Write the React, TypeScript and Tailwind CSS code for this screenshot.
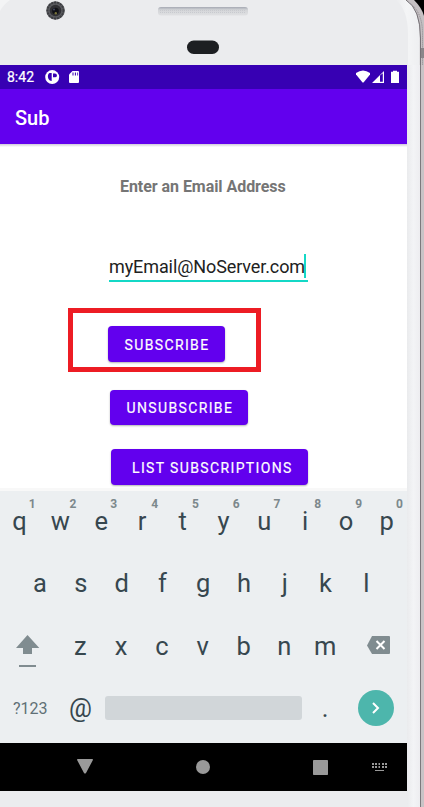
import type { ReactNode } from "react";

const TOP = [
  ["q", "1"], ["w", "2"], ["e", "3"], ["r", "4"], ["t", "5"],
  ["y", "6"], ["u", "7"], ["i", "8"], ["o", "9"], ["p", "0"],
];
const MIDDLE = ["a", "s", "d", "f", "g", "h", "j", "k", "l"];
const BOTTOM = ["z", "x", "c", "v", "b", "n", "m"];

function Key({ children, hint }: { children: ReactNode; hint?: string }) {
  return (
    <div className="relative flex h-full w-[40.8px] shrink-0 items-center justify-center text-[25.5px] leading-none text-[#37474f]">
      {children}
      {hint && (
        <span className="absolute left-[28.5px] top-[7px] w-[9px] text-center text-[12px] font-bold leading-[12px] text-[#7c888c]">
          {hint}
        </span>
      )}
    </div>
  );
}

function PhoneTop() {
  return (
    <div className="relative h-[65px] w-full shrink-0">
      <svg className="block" width="424" height="65" viewBox="0 0 424 65">
        <defs>
          <linearGradient id="speaker" x1="0" y1="0" x2="0" y2="1">
            <stop offset="0" stopColor="#a5a9b3" />
            <stop offset="0.35" stopColor="#d3d5d8" />
            <stop offset="1" stopColor="#e0e1e3" />
          </linearGradient>
          <pattern id="mesh" width="2" height="2" patternUnits="userSpaceOnUse">
            <rect width="1" height="1" fill="#c8cacf" />
          </pattern>
          <linearGradient id="rim" x1="0" y1="0" x2="1" y2="0">
            <stop offset="0" stopColor="#ebecee" />
            <stop offset="0.45" stopColor="#f4f5f6" />
            <stop offset="1" stopColor="#eeeff1" />
          </linearGradient>
        </defs>
        <path d="M398 0H424V65H398Z" fill="#000" />
        <path d="M398 0H414Q422 8 424 16V65H398Z" fill="#c5c0c3" />
        <path d="M405 0Q423 9 422.500 35V65" fill="none" stroke="#8b878b" strokeWidth="1" strokeDasharray="1 1" />
        <path d="M0 0H406Q419.500 9 419.500 38V65H0Z" fill="#ebecee" />
        <path d="M396 0H406Q419.500 9 419.500 38V65H408V34Q408 10 396 0Z" fill="url(#rim)" />
        <path d="M406 0Q420.500 9 420.500 38V65" fill="none" stroke="#767277" strokeWidth="1" />
        <path d="M0 0H10Q4 4 0 11Z" fill="#f3f4f5" />
        <rect x="421" y="48" width="3" height="10" fill="#8a868a" />
        <circle cx="55.500" cy="10.500" r="9.300" fill="#5a5b5f" />
        <circle cx="55.500" cy="10.500" r="8" fill="none" stroke="#3c3d41" strokeWidth="1.800" strokeDasharray="2 1" />
        <circle cx="55.500" cy="10.500" r="5.800" fill="#303034" />
        <circle cx="55.500" cy="11" r="3.300" fill="#101116" />
        <circle cx="55.800" cy="13.300" r="1.200" fill="#78733a" />
        <circle cx="54" cy="9.500" r="0.900" fill="#4a4f68" />
        <rect x="158" y="7" width="90" height="8.500" rx="3" fill="url(#speaker)" />
        <rect x="160" y="9" width="86" height="5" fill="url(#mesh)" />
        <rect x="187" y="40.500" width="32" height="13.500" rx="6.700" fill="#1d1f22" />
      </svg>
    </div>
  );
}

function StatusBar() {
  return (
    <div className="flex h-6 items-center bg-[#3700b3] text-white">
      <span className="ml-[7px] w-[38px] text-[14px] leading-6 [-webkit-text-stroke:0.2px_white]">8:42</span>
      <svg width="36" height="24" viewBox="0 0 36 24" fill="white">
        <circle cx="7.200" cy="12.100" r="7" />
        <path d="M6.700 8V16Q4.500 16 3.500 14Q2.500 12 3 10Q3.500 8.500 4.500 8Z" fill="#3700b3" />
        <path d="M8 8.500H10A1.900 1.900 0 0 1 10 12.300H8Z" fill="#3700b3" />
        <path d="M27.500 6H33Q34 6 34 7V17Q34 18 33 18H25Q24 18 24 17V9.500Z" />
        <path d="M27.500 7.500h1v3h-1zM29.900 7.500h1v3h-1zM32.300 7.500h0.800v3h-0.800z" fill="#3700b3" />
      </svg>
      <svg className="ml-auto" width="52" height="24" viewBox="0 0 52 24" fill="white">
        <path d="M1 8Q8 3 15 8V9.500L8.500 17.500H7.500L1 9.500Z" />
        <path fillRule="evenodd" d="M17 18L29 6V18ZM25 10.500V16.800H27.800V8.200Z" />
        <path d="M36 6.800H38V5.700H42V6.800H44V18H36Z" />
      </svg>
    </div>
  );
}

function ActionButton({ className, children }: { className: string; children: ReactNode }) {
  return (
    <button className={"flex items-center rounded-[4px] bg-[#6200ee] text-[14px] font-normal whitespace-nowrap text-white [-webkit-text-stroke:0.2px_white] shadow-[0_1px_2px_rgba(0,0,0,0.3)] " + className}>
      {children}
    </button>
  );
}

function Content() {
  return (
    <main className="flex h-[347px] flex-col items-start overflow-hidden bg-white">
      <div className="h-[3px] w-full bg-linear-to-b from-[#cfc9da] to-white" />
      <p className="mt-[29px] ml-[120px] h-[22px] whitespace-nowrap text-[16px] font-bold leading-[22px] tracking-[-0.05px] text-[#757575]">Enter an Email Address</p>
      <div className="mt-[54px] ml-[109px] flex h-[30px] w-[199px] border-b-2 border-[#14d8c6] text-[18px] leading-[30px] text-[#212121]">
        <span className="w-[195px] whitespace-nowrap tracking-[-0.1px]">myEmail@NoServer.com</span>
        <span className="mt-[2px] h-[24px] w-[2px] bg-[#14d8c6]" />
      </div>
      <div className="mt-[26px] ml-[68px] h-[64px] w-[193px] border-[5px] border-[#ed1c24] pl-[35px] pt-[13px]">
        <ActionButton className="h-9 w-[117px] pl-[16.5px] pt-[2px] tracking-[1.37px]">SUBSCRIBE</ActionButton>
      </div>
      <ActionButton className="mt-[18px] ml-[110px] h-[35px] w-[138px] pl-[16.5px] pt-[2px] tracking-[1.37px]">UNSUBSCRIBE</ActionButton>
      <ActionButton className="mt-[24px] ml-[111px] h-9 w-[197px] pl-[21px] pt-[2px] tracking-[1.37px]">LIST SUBSCRIPTIONS</ActionButton>
      <div className="mt-[3px] h-[3px] w-full bg-[#f8f8f8]" />
    </main>
  );
}

function Keyboard() {
  return (
    <div className="h-[252px] bg-[#eceff1]">
      <div className="ml-[-0.8px] flex h-[62px]">
        {TOP.map(([letter, hint]) => <Key key={letter} hint={hint}>{letter}</Key>)}
      </div>
      <div className="flex h-[62px] pl-[19.6px]">
        {MIDDLE.map((letter) => <Key key={letter}>{letter}</Key>)}
      </div>
      <div className="flex h-[63px]">
        <svg width="60" height="63" viewBox="0 0 60 63" fill="#808c90">
          <path d="M27.500 20L39.300 33H32V39H23V33H16Z" />
          <rect x="19" y="50" width="17" height="2" />
        </svg>
        {BOTTOM.map((letter) => <Key key={letter}>{letter}</Key>)}
        <svg width="60" height="63" viewBox="0 0 60 63">
          <path d="M26 21H43Q44 21 44 22V38Q44 39 43 39H26L21 30.500Z" fill="#808c90" />
          <path d="M30.500 26L38.500 34M38.500 26L30.500 34" stroke="white" strokeWidth="2" />
        </svg>
      </div>
      <div className="flex h-[62px] items-center">
        <span className="w-[60px] pl-[13px] pb-px text-[16px] text-[#607076]">?123</span>
        <Key>@</Key>
        <div className="relative top-[-1px] ml-[4px] h-[24px] w-[197px] rounded-[3px] bg-[#d1d6d9]" />
        <div className="ml-[3px]"><Key>.</Key></div>
        <div className="relative top-[-1px] ml-[12px] flex size-[36px] items-center justify-center rounded-full bg-[#4db6ac]">
          <svg width="12" height="14" viewBox="0 0 12 14"><path d="M3 2L8 7L3 12" fill="none" stroke="white" strokeWidth="2" /></svg>
        </div>
      </div>
    </div>
  );
}

function NavigationBar() {
  return (
    <svg className="block bg-black" width="407" height="48" viewBox="0 0 407 48" fill="#999">
      <path d="M78 16H92Q93.500 16 92.800 17.200L86 30Q85 31.200 84 30L77.200 17.200Q76.500 16 78 16Z" />
      <circle cx="203" cy="24" r="7" />
      <rect x="313" y="17" width="15" height="15" rx="0.700" />
      <path d="M372 20h2v2h-2zM375 20h2v2h-2zM378.500 20h1.500v2h-1.500zM382 20h2v2h-2zM385 20h2v2h-2zM372 23h2v2h-2zM375 23h2v2h-2zM378.500 23h1.500v2h-1.500zM382 23h2v2h-2zM385 23h2v2h-2zM375 27h9v1h-9z" />
    </svg>
  );
}

export default function App() {
  return (
    <div className="flex h-[807px] w-[424px] flex-col overflow-hidden bg-[#ebecee] font-[Roboto,sans-serif]">
      <PhoneTop />
      <div className="flex h-[742px]">
        <div className="w-[407px] shrink-0">
          <StatusBar />
          <header className="flex h-[55px] items-center bg-[#6200ee] pl-[15px] pt-[2px] text-[20px] font-medium text-white">Sub</header>
          <Content />
          <Keyboard />
          <NavigationBar />
        </div>
        <div className="h-full w-[13px] bg-linear-to-r from-[#eaebed] via-[#f3f4f6] to-[#ededf0]" />
        <div className="h-full w-px bg-[#7d797d]" />
        <div className="h-full w-[3px] bg-[#c9c3c6]" />
      </div>
    </div>
  );
}
